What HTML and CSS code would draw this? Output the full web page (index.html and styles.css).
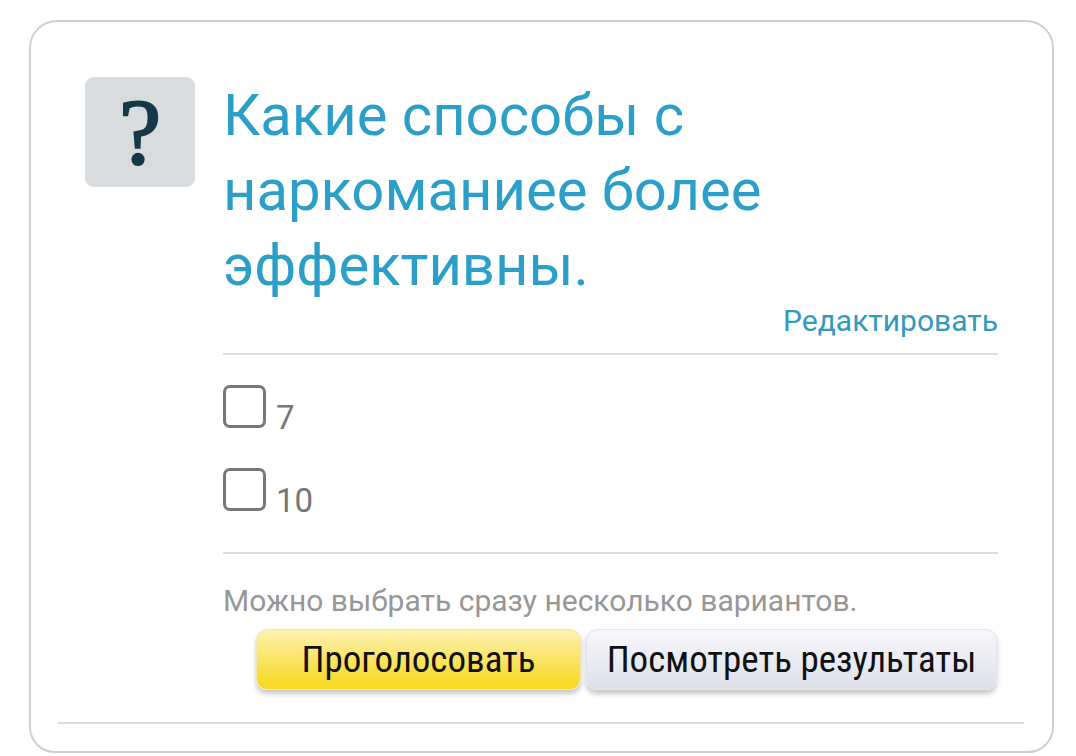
FILE: index.html
```html
<!DOCTYPE html>
<html lang="ru">
<head>
<meta charset="utf-8">
<link rel="stylesheet" href="styles.css">
</head>
<body>
<div class="card">
  <div class="poll">
    <div class="qicon">?</div>
    <div class="main">
      <h1 class="title">Какие способы с наркоманиее более эффективны.</h1>
      <div class="edit-row"><a class="edit" href="#">Редактировать</a></div>
      <div class="options">
        <label class="opt"><span class="box"></span><span class="opt-text">7</span></label>
        <label class="opt"><span class="box"></span><span class="opt-text">10</span></label>
      </div>
      <p class="hint">Можно выбрать сразу несколько вариантов.</p>
    </div>
  </div>
  <div class="buttons">
    <button class="btn btn-vote">Проголосовать</button>
    <button class="btn btn-results">Посмотреть результаты</button>
  </div>
  <div class="bottom-line"></div>
</div>
</body>
</html>
```

FILE: styles.css
```css
html, body {
  margin: 0;
  padding: 0;
  background: #fff;
}
body {
  font-family: Roboto, "Noto Sans", sans-serif;
  padding: 20px 22px 0 29px;
  height: 756px;
  box-sizing: border-box;
  overflow: hidden;
}
.card {
  box-sizing: border-box;
  width: 1025px;
  height: 733px;
  border: 2px solid #cfcfcf;
  border-radius: 28px 28px 26px 26px;
  padding: 55px 0 0 0;
  display: flex;
  flex-direction: column;
}
.poll {
  display: flex;
  padding-left: 54px;
  gap: 28px;
}
.qicon {
  flex: 0 0 auto;
  width: 110px;
  height: 110px;
  background: #d9dcde;
  border-radius: 9px;
  display: flex;
  align-items: center;
  justify-content: center;
  font-family: "Liberation Serif", "DejaVu Serif", serif;
  font-weight: 400;
  font-size: 94px;
  -webkit-text-stroke: 2.2px #163947;
  color: #163947;
  line-height: 1;
  padding-bottom: 2px;
  box-sizing: border-box;
}
.main {
  width: 775px;
}
.title {
  margin: 0;
  font-weight: 400;
  font-size: 58px;
  line-height: 75px;
  color: #2b9fc7;
  margin-top: 1px;
}
.edit-row {
  display: flex;
  justify-content: flex-end;
  margin-top: 2px;
  padding-bottom: 16px;
  border-bottom: 2px solid #dedede;
}
.edit {
  font-size: 30px;
  line-height: 32px;
  color: #3399bd;
  text-decoration: none;
}
.options {
  padding: 30px 0 39px;
  border-bottom: 2px solid #dedede;
  display: flex;
  flex-direction: column;
  gap: 38px;
}
.opt {
  display: flex;
  align-items: flex-end;
  gap: 10px;
  height: 45px;
}
.box {
  width: 43px;
  height: 43px;
  box-sizing: border-box;
  border: 3px solid #777;
  border-radius: 7px;
  align-self: flex-start;
}
.opt-text {
  font-size: 33px;
  line-height: 33px;
  color: #777;
  margin-bottom: -4px;
}
.hint {
  margin: 29px 0 0;
  font-size: 30px;
  line-height: 36px;
  color: #979797;
}
.buttons {
  display: flex;
  justify-content: flex-end;
  gap: 5px;
  padding-right: 55px;
  margin-top: 10px;
}
.btn {
  font-family: "Liberation Sans Narrow", "Roboto Condensed", Roboto, sans-serif;
  font-size: 37px;
  color: #111;
  height: 61px;
  border: 1px solid #e4e4ea;
  border-radius: 11px;
  padding: 0 10px;
  box-shadow: 0 4px 5px rgba(0,0,0,0.22);
}
.btn-vote {
  width: 325px;
  background: linear-gradient(#fdf2b0, #f7d928 90%);
  border-color: #f1e7b0;
}
.btn-results {
  width: 411px;
  background: linear-gradient(#f7f7fb, #dfdfeb);
}
.bottom-line {
  margin: 32px 28px 0 27px;
  border-top: 2px solid #dedede;
}
```
